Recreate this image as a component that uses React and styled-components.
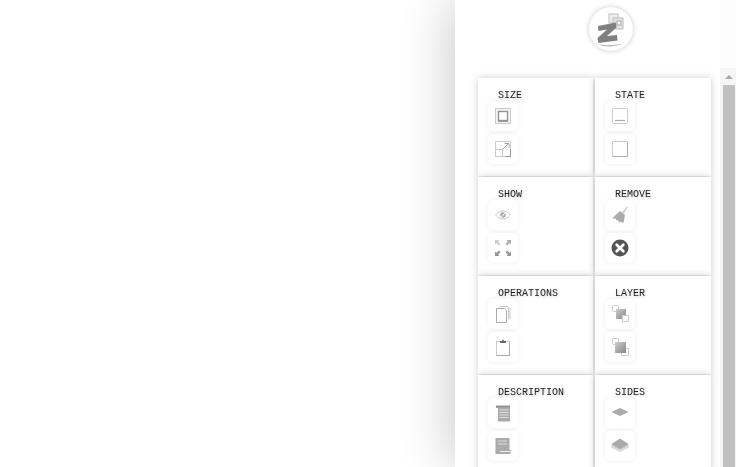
import React from 'react'
import styled, { createGlobalStyle } from 'styled-components'

const Global = createGlobalStyle`
  html, body { margin: 0; height: 100%; background: #fff; overflow: hidden; }
  #root { height: 100%; }
`

const G = '#ababab'
const D = '#949494'
const L = '#cbcbcb'

const icons = {
  restore: (
    <>
      <rect x="7.500" y="7.500" width="15" height="15" fill="#f4f4f4" stroke={L} />
      <rect x="10.500" y="10.500" width="9" height="9" fill="#fff" stroke={D} strokeWidth="1.400" />
      <path d="M10 20h10" stroke={D} strokeWidth="1.800" />
    </>
  ),
  resize: (
    <>
      <path d="M15 7.500h-7.500v15h15V15" fill="none" stroke={L} />
      <path d="M22.500 15v7.500h-5" fill="none" stroke={D} />
      <rect x="7.500" y="15.500" width="7" height="7" fill="#fff" stroke={L} />
      <path d="M15 15l5-5M16.500 9.500h4.500V14" fill="none" stroke={G} />
      <path d="M15.500 7.500h7v7" fill="none" stroke={L} />
    </>
  ),
  minimize: (
    <>
      <rect x="7.500" y="7.500" width="15" height="15" rx="1" fill="#fff" stroke={L} />
      <path d="M10 19.500h10" stroke={G} strokeWidth="1.200" />
    </>
  ),
  maximize: (
    <>
      <rect x="7.500" y="7.500" width="15" height="15" rx="1" fill="#fff" stroke={L} />
      <path d="M7.500 22.500h15V8" fill="none" stroke={G} />
    </>
  ),
  eye: (
    <>
      <path d="M7.500 15c2.400-2.800 4.800-4 7.500-4s5.100 1.200 7.500 4c-2.400 2.800-4.800 4-7.500 4s-5.100-1.200-7.500-4z" fill="#fff" stroke={L} />
      <circle cx="15" cy="15" r="2.800" fill={G} />
      <path d="M13.500 17l3.500-4" stroke="#fff" strokeWidth="1" />
    </>
  ),
  expand: (
    <>
      <path d="M7 7h4.500l-1.400 1.400 2.400 2.400-1.700 1.700-2.400-2.400L7 11.500z" fill={L} />
      <path d="M23 7v4.500l-1.400-1.400-2.400 2.400-1.700-1.700 2.400-2.400L18.500 7z" fill={G} />
      <path d="M7 23v-4.500l1.400 1.400 2.400-2.400 1.700 1.700-2.400 2.400 1.400 1.400z" fill={D} />
      <path d="M23 23h-4.500l1.400-1.400-2.400-2.400 1.700-1.700 2.400 2.400 1.400-1.400z" fill={D} />
    </>
  ),
  broom: (
    <>
      <path d="M17 12.500l5-6 .8.600-4 6.400z" fill={L} />
      <path d="M15 11l5 4-1.500 8-3-1.500-1 1-2-2.500-1 .5-1-2-3 .5 1.500-2.500z" fill={G} />
    </>
  ),
  close: (
    <>
      <circle cx="15" cy="15" r="8.500" fill="#555" />
      <path d="M11.700 11.700l6.600 6.600M18.300 11.700l-6.600 6.600" stroke="#fff" strokeWidth="2.800" strokeLinecap="round" />
    </>
  ),
  copy: (
    <>
      <path d="M11.500 7.500h8.500l2 2v11" fill="none" stroke={L} />
      <path d="M19.500 9.500h1v11" fill="none" stroke={L} />
      <path d="M8.500 9.500h8l2 2v12h-10z" fill="#fff" stroke={G} />
    </>
  ),
  paste: (
    <>
      <rect x="8.500" y="9.500" width="13" height="14" fill="#fff" stroke={L} />
      <path d="M8.500 23.500h13V10" fill="none" stroke={G} />
      <path d="M12 11V9h2l1-2 1 2h2v2z" fill="#666" />
    </>
  ),
  raise: (
    <>
      <rect x="7.500" y="6.500" width="6" height="6" rx="1" fill="#fff" stroke={L} />
      <defs>
        <linearGradient id="lg" x1="0" y1="0" x2="1" y2="1">
          <stop offset="0" stopColor="#cfcfcf" />
          <stop offset="1" stopColor="#858585" />
        </linearGradient>
      </defs>
      <rect x="11" y="10" width="10" height="10" fill="url(#lg)" />
      <rect x="17.500" y="16.500" width="6" height="6" fill="#fff" stroke={L} />
    </>
  ),
  lower: (
    <>
      <rect x="7.500" y="6.500" width="6" height="6" rx="1" fill="#fff" stroke={L} />
      <path d="M18 16.500h5.500v7h-7V20" fill="#fff" stroke={L} />
      <rect x="10" y="10" width="11" height="11" fill="url(#lg)" />
    </>
  ),
  noteTop: (
    <>
      <path d="M9 8h13v15.500H10V10H7.500z" fill={G} />
      <path d="M8 7.500h14v2H8z" fill={D} />
      <path d="M11.500 12h9M11.500 14.500h9M11.500 17h9M11.500 19.500h9" stroke="#e0e0e0" />
    </>
  ),
  noteBottom: (
    <>
      <path d="M7.500 7h14v14H7.500z" fill={G} />
      <path d="M10 10h9M10 13h9" stroke="#ddd" />
      <path d="M10 19h13v2c0 1-.5 2-2 2H8c-.5 0-.5-.5-.5-1v-3z" fill={G} />
      <path d="M12 20.500h11" stroke="#eee" />
    </>
  ),
  flat: <path d="M15 10l8.500 4-8.500 4-8.500-4z" fill={G} />,
  solid: (
    <>
      <path d="M15 8l8.500 5.500v3L15 21l-8.500-4.500v-3z" fill={L} />
      <path d="M15 7.500l8.500 5.500-8.500 5-8.500-5z" fill={G} />
      <path d="M6.500 15l8.500 5 8.500-5" fill="none" stroke="#e8e8e8" />
    </>
  ),
}

const groups = [
  { title: 'SIZE', items: ['restore', 'resize'] },
  { title: 'STATE', items: ['minimize', 'maximize'] },
  { title: 'SHOW', items: ['eye', 'expand'] },
  { title: 'REMOVE', items: ['broom', 'close'] },
  { title: 'OPERATIONS', items: ['copy', 'paste'] },
  { title: 'LAYER', items: ['raise', 'lower'] },
  { title: 'DESCRIPTION', items: ['noteTop', 'noteBottom'] },
  { title: 'SIDES', items: ['flat', 'solid'] },
]

function Logo() {
  return (
    <LogoBadge>
      <svg width="44" height="44" viewBox="0 0 44 44">
        <rect x="20" y="7" width="9" height="9" fill="#eee" stroke="#c0c0c0" />
        <rect x="24" y="11" width="10" height="11" fill="#e4e4e4" stroke="#bcbcbc" />
        <rect x="28" y="14" width="4" height="4" fill="#fff" stroke="#a5a5a5" />
        <path d="M9 37.500c8 1 15 1 25-1-8 3.500-19 4-25 1z" fill="#b5b5b5" />
        <path d="M9 19l18-3.500.5 5-9.500 8.500 10-1 .5 5.500-19 2.500-1-5 9.500-8.500-8.500 1.500z" fill="#808080" />
      </svg>
    </LogoBadge>
  )
}

export default function App() {
  return (
    <Page>
      <Global />
      <Panel>
        <Main>
          <Header>
            <Logo />
          </Header>
          <Grid>
            {groups.map((group) => (
              <Card key={group.title}>
                <Label>{group.title}</Label>
                <Buttons>
                  {group.items.map((name) => (
                    <IconButton key={name}>
                      <svg width="30" height="30" viewBox="0 0 30 30">
                        {icons[name]}
                      </svg>
                    </IconButton>
                  ))}
                </Buttons>
              </Card>
            ))}
          </Grid>
        </Main>
        <Rail>
          <Scrollbar>
            <ArrowUp />
            <Thumb />
          </Scrollbar>
        </Rail>
      </Panel>
    </Page>
  )
}

const Page = styled.div`
  height: 100%;
  display: flex;
  justify-content: flex-end;
  overflow: hidden;
`

const Panel = styled.div`
  width: 281px;
  height: 467px;
  display: flex;
  background: #fff;
  box-shadow: 0 0 50px rgba(0, 0, 0, 0.24);
  overflow: hidden;
  flex-shrink: 0;
`

const Main = styled.div`
  width: 265px;
  display: flex;
  flex-direction: column;
`

const Header = styled.div`
  height: 78px;
  padding: 7px 0 0 134px;
  box-sizing: border-box;
  flex-shrink: 0;
`

const LogoBadge = styled.div`
  width: 44px;
  height: 44px;
  border-radius: 50%;
  background: #fff;
  box-shadow: 0 0 5px rgba(0, 0, 0, 0.22);

  svg {
    display: block;
    filter: blur(0.4px);
  }
`

const Grid = styled.div`
  display: grid;
  grid-template-columns: 115px 116px;
  grid-auto-rows: 98px;
  column-gap: 2px;
  row-gap: 1px;
  padding-left: 23px;
`

const Card = styled.div`
  background: #fff;
  padding: 12px 10px 0;
  box-sizing: border-box;
  box-shadow: 0 0 8px rgba(0, 0, 0, 0.2);
`

const Label = styled.div`
  margin-left: 10px;
  font: 10px/11px "Liberation Mono", monospace;
  color: #222;
  text-shadow: 1px 1px 3px rgba(0, 0, 0, 0.22);
  will-change: transform;
`

const Buttons = styled.div`
  display: flex;
  flex-direction: column;
  gap: 3px;
`

const IconButton = styled.div`
  width: 30px;
  height: 30px;
  border-radius: 5px;
  background: #fff;
  box-shadow: 0 0 5px rgba(0, 0, 0, 0.07);

  svg {
    display: block;
    filter: blur(0.3px);
  }
`

const Rail = styled.div`
  flex: 1;
  padding-top: 68px;
  background: #fdfdfd;
  display: flex;
`

const Scrollbar = styled.div`
  flex: 1;
  background: #f5f5f5;
  display: flex;
  flex-direction: column;
  align-items: center;
  padding: 7px 1px 0 3px;
`

const ArrowUp = styled.div`
  width: 0;
  height: 0;
  border-left: 4px solid transparent;
  border-right: 4px solid transparent;
  border-bottom: 4px solid #a8a8a8;
  margin-bottom: 6px;
`

const Thumb = styled.div`
  align-self: stretch;
  flex: 1;
  background: #c0c0c0;
`
